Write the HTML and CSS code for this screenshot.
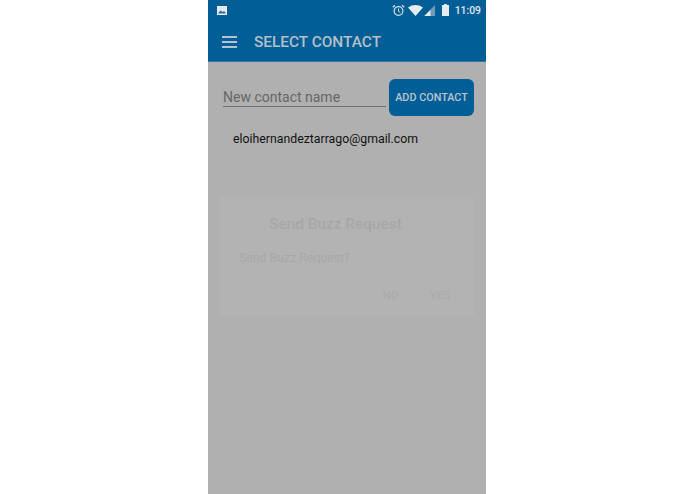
FILE: index.html
```html
<!DOCTYPE html>
<html lang="en">
<head>
<meta charset="utf-8">
<title>Select Contact</title>
<link rel="stylesheet" href="styles.css">
</head>
<body>
<div class="phone">
  <div class="status">
    <svg class="pic" width="10" height="9" viewBox="0 0 10 9"><rect x="0.5" y="0.5" width="9" height="8" fill="#dfe9f0" stroke="#e8eef3"/><path d="M1 7.5 L3.5 4.5 L5.5 6 L7 5 L9 7.5Z" fill="#2a6f9f"/></svg>
    <div class="status-right">
      <svg class="alarm" width="13" height="13" viewBox="0 0 13 13" fill="none" stroke="#d5dfe6"><circle cx="6.5" cy="7" r="4.4" stroke-width="1.2"/><path d="M6.5 4.5V7.3L8.3 8.4" stroke-width="1"/><path d="M0.8 3.2L3 1.2M12.2 3.2L10 1.2" stroke-width="1.3"/></svg>
      <svg class="wifi" width="15" height="11" viewBox="0 0 15 11"><path d="M0 2.4Q7.5 -2.2 15 2.4L7.5 11Z" fill="#e6ecf0"/></svg>
      <svg class="signal" width="11" height="11" viewBox="0 0 11 11"><path d="M11 0V11H0Z" fill="#6f9cba"/><path d="M6.5 5V11H0.5Z" fill="#e6ecf0"/></svg>
      <svg class="battery" width="7" height="12" viewBox="0 0 8 12" preserveAspectRatio="none"><path d="M2.5 0H5.5V1H8V12H0V1H2.5Z" fill="#e6ecf0"/></svg>
      <span class="time">11:09</span>
    </div>
  </div>
  <header class="appbar">
    <div class="burger"><span></span><span></span><span></span></div>
    <h1 class="title">SELECT CONTACT</h1>
  </header>
  <main class="content">
    <div class="add-row">
      <div class="name-field">New contact name</div>
      <button class="add-btn">ADD CONTACT</button>
    </div>
    <div class="contact">eloihernandeztarrago@gmail.com</div>
  </main>
  <div class="dialog">
    <div class="dialog-title">Send Buzz Request</div>
    <div class="dialog-msg">Send Buzz Request?</div>
    <div class="dialog-actions"><span>NO</span><span>YES</span></div>
  </div>
</div>
</body>
</html>
```
FILE: styles.css
```css
* { box-sizing: border-box; }
html, body { margin: 0; height: 100%; background: #fff; overflow: hidden; }
body { display: flex; justify-content: center; padding-right: 1px; font-family: Roboto, "Liberation Sans", sans-serif; }
.phone { position: relative; width: 278px; height: 494px; background: #b0b0b0; display: flex; flex-direction: column; }
.status { height: 20px; background: #025e96; display: flex; align-items: center; justify-content: space-between; padding: 0 5px 0 9px; }
.status-right { display: flex; align-items: center; }
.alarm { margin-right: 3px; }
.wifi { margin-right: 1px; }
.signal { margin-right: 7px; margin-top: 1px; }
.battery { margin-right: 6px; }
.time { font-size: 10.4px; font-weight: 500; color: #e3e9ed; }
.appbar { height: 42px; background: #025e96; display: flex; align-items: center; padding: 3px 0 0 14px; border-bottom: 1px solid #3d7398; }
.burger { width: 15px; display: flex; flex-direction: column; gap: 3px; margin-right: 17px; }
.burger span { display: block; height: 2px; background: #b4c3cd; }
.title { margin: 0; font-size: 15.4px; font-weight: 500; color: #b4c0c9; line-height: 20px; }
.content { flex: 1; padding: 17px 12px 0 15px; }
.add-row { display: flex; align-items: flex-start; justify-content: space-between; }
.name-field { width: 163px; height: 28px; padding-top: 9px; font-size: 14px; line-height: 19px; color: #666; border-bottom: 1px solid #707070; }
.add-btn { width: 85px; height: 37px; border: 0; border-radius: 6px; background: #025e96; color: #b9c6cf; font: 500 10.8px Roboto, sans-serif; padding: 0; }
.contact { margin: 14px 0 0 10px; font-size: 12.3px; line-height: 18px; color: #111; }
.dialog { position: absolute; left: 12px; top: 197px; width: 254px; height: 119px; background: #b3b3b3; display: flex; flex-direction: column; }
.dialog-title { margin-top: 17px; padding-right: 23px; text-align: center; font-size: 15.4px; font-weight: 500; line-height: 20px; color: #a7a7a7; }
.dialog-msg { margin: 16px 0 0 19px; font-size: 12.3px; line-height: 17px; color: #a8a8a8; }
.dialog-actions { margin-top: 21px; display: flex; justify-content: flex-end; gap: 31px; padding-right: 24px; font-size: 11.5px; line-height: 14px; color: #a9abab; }
```
